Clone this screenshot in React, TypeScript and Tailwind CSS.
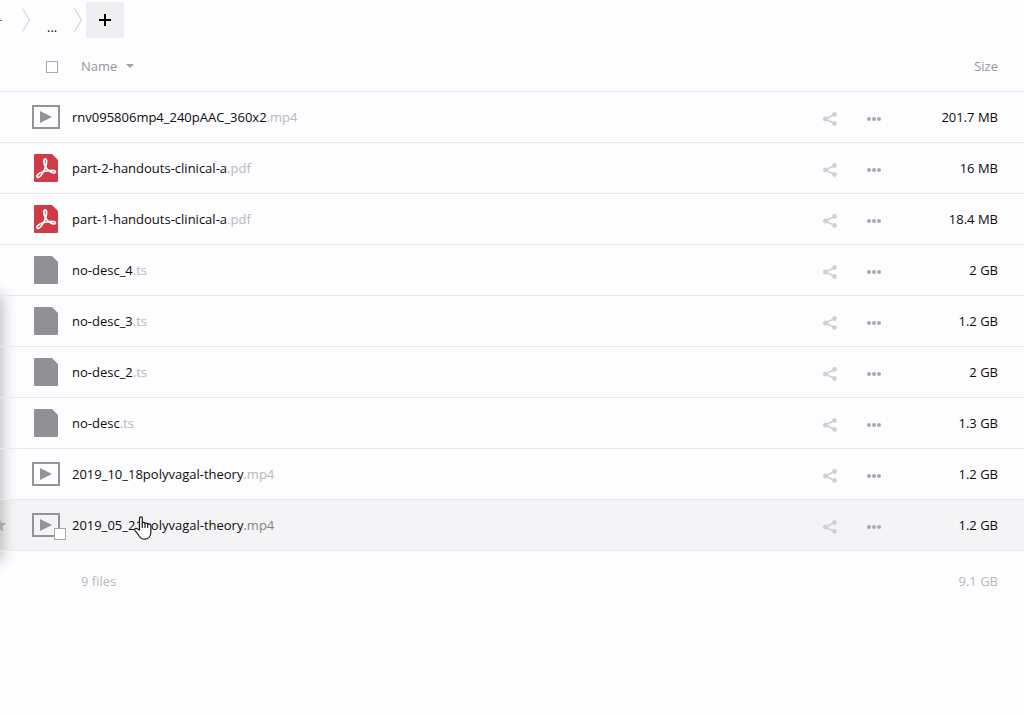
import clsx from 'clsx';

interface FileItem {
    name: string;
    ext: string;
    size: string;
    hovered?: boolean;
}

const files: FileItem[] = [
    { name: 'rnv095806mp4_240pAAC_360x2', ext: 'mp4', size: '201.7 MB' },
    { name: 'part-2-handouts-clinical-a', ext: 'pdf', size: '16 MB' },
    { name: 'part-1-handouts-clinical-a', ext: 'pdf', size: '18.4 MB' },
    { name: 'no-desc_4', ext: 'ts', size: '2 GB' },
    { name: 'no-desc_3', ext: 'ts', size: '1.2 GB' },
    { name: 'no-desc_2', ext: 'ts', size: '2 GB' },
    { name: 'no-desc', ext: 'ts', size: '1.3 GB' },
    { name: '2019_10_18polyvagal-theory', ext: 'mp4', size: '1.2 GB' },
    { name: '2019_05_21polyvagal-theory', ext: 'mp4', size: '1.2 GB', hovered: true },
];

const FileIcon = ({ ext }: { ext: string }) => {
    if (ext === 'mp4') {
        return (
            <svg width="28" height="24" viewBox="0 0 28 24" aria-hidden="true">
                <rect x="1" y="1" width="26" height="22" fill="none" stroke="#959396" strokeWidth="2" />
                <path d="M8 6v12l12-6z" fill="#959396" />
            </svg>
        );
    }
    if (ext === 'pdf') {
        return (
            <svg width="24" height="28" viewBox="0 0 24 28" aria-hidden="true">
                <path d="M1 0h17l6 6v21a1 1 0 0 1-1 1H1a1 1 0 0 1-1-1V1a1 1 0 0 1 1-1z" fill="#cf3c47" />
                <path
                    d="M11 5c1.700-.4 2 2.400 1 6.500-1.200 4.600-4.700 10.400-7.100 11.700-1.500.8-2.800-.8-1.600-2.200 2-2.300 8.200-4.200 13.500-4.500 3.100-.2 4.800.3 4.700 1.400-.1 1.400-2.700 1.200-5-.2-2.900-1.700-5.600-5.100-6.400-8.500-.5-2.200-.2-3.900.9-4.200z"
                    fill="none"
                    stroke="#fff"
                    strokeWidth="1.700"
                    strokeLinejoin="round"
                />
            </svg>
        );
    }
    return (
        <svg width="24" height="28" viewBox="0 0 24 28" aria-hidden="true">
            <path d="M1 0h17l6 6v21a1 1 0 0 1-1 1H1a1 1 0 0 1-1-1V1a1 1 0 0 1 1-1z" fill="#929093" />
        </svg>
    );
};

const ShareIcon = () => (
    <svg width="14" height="14" viewBox="0 0 14 14" fill="#d2d0d3" aria-hidden="true">
        <path d="M11.500 2.500L2.500 7l9 4.500" fill="none" stroke="#d2d0d3" strokeWidth="1.800" />
        <circle cx="2.500" cy="7" r="2.500" />
        <circle cx="11.500" cy="2.500" r="2.400" />
        <circle cx="11.500" cy="11.500" r="2.400" />
    </svg>
);

const MoreIcon = () => (
    <svg width="14" height="14" viewBox="0 0 14 14" fill="#aaa8ab" aria-hidden="true">
        <circle cx="2" cy="7" r="2" />
        <circle cx="7" cy="7" r="2" />
        <circle cx="12" cy="7" r="2" />
    </svg>
);

const Separator = () => (
    <svg width="8" height="24" viewBox="0 0 8 24" fill="none" stroke="#cbc9cc" aria-hidden="true">
        <path d="M.5.5l7 11.500-7 11.500" />
    </svg>
);

const HandCursor = () => (
    <svg
        className="absolute left-[62px] top-4 z-10"
        width="18"
        height="24"
        viewBox="0 0 18 24"
        fill="#fff"
        stroke="#1c1b1f"
        strokeWidth="1.200"
        strokeLinejoin="round"
        strokeLinecap="round"
        aria-hidden="true"
    >
        <path d="M5.500 14V2.200C5.500.3 8.300.3 8.300 2.200V7c.6-.9 2.400-.7 2.700.5.8-.8 2.400-.5 2.700.7 1.300-.7 3.200 0 3.200 1.800v5.500c0 4.500-2.400 7.700-6.400 7.700-3 0-4.300-1.500-5.500-3.500L1 14.500c-.9-1.700.9-2.900 2.300-1.700z" />
        <path d="M8.300 7v4.500M11 7.500v4M13.700 8.200v3.300" fill="none" />
    </svg>
);

const App = () => {
    return (
        <div className="relative min-h-screen overflow-hidden bg-[#fdfcfe] font-['Open_Sans',sans-serif] text-[13px] leading-5 text-[#0d0c0e]">
            {/* edge of the side panel */}
            <div className="absolute -left-10 top-74 h-66 w-10 shadow-[0_0_16px_1px_rgba(0,0,0,0.3)]" />

            <nav className="flex h-10 items-center" aria-label="Breadcrumb">
                <span className="h-px w-[22px]">
                    <span className="block h-px w-0.5 bg-[#6b696c]" />
                </span>
                <Separator />
                <a href="#" className="mx-[17px] pt-3.5 leading-5">...</a>
                <Separator />
                <button className="ml-1 flex h-9 w-[38px] items-center justify-center rounded-xs bg-[#efeef0]" aria-label="New">
                    <svg width="12" height="12" viewBox="0 0 12 12" stroke="#000" strokeWidth="2" aria-hidden="true">
                        <path d="M6 0v12M0 6h12" />
                    </svg>
                </button>
            </nav>

            <table className="w-full table-fixed border-separate border-spacing-0">
                <colgroup>
                    <col className="w-18" />
                    <col />
                    <col className="w-11" />
                    <col className="w-11" />
                    <col className="w-32" />
                </colgroup>
                <thead>
                    <tr className="h-13 text-[#98969a] *:border-b *:border-[#e9e8ea] *:font-normal">
                        <th className="pt-0.5">
                            <input
                                type="checkbox"
                                aria-label="Select all"
                                className="ml-[46px] block size-3 appearance-none border border-[#aba9ac]"
                            />
                        </th>
                        <th className="pl-[9px] text-left">
                            <button className="flex items-center gap-2">
                                Name
                                <svg width="8" height="4" viewBox="0 0 8 4" fill="#a5a3a6" className="ml-px" aria-hidden="true">
                                    <path d="M0 0h8L4 4z" />
                                </svg>
                            </button>
                        </th>
                        <th />
                        <th />
                        <th className="pr-[26px] text-right">Size</th>
                    </tr>
                </thead>
                <tbody>
                    {files.map((file) => (
                        <tr
                            key={file.name}
                            className={clsx('h-[51px] *:border-b *:border-[#e9e8ea]', file.hovered && 'bg-[#f4f3f5]')}
                        >
                            <td className="relative">
                                <div className="flex justify-center pl-5">
                                    <FileIcon ext={file.ext} />
                                </div>
                                {file.hovered && (
                                    <>
                                        <svg className="absolute -left-2 top-[18px]" width="14" height="14" viewBox="0 0 14 14" fill="#a9a7aa" aria-hidden="true">
                                            <path d="M7 0l2.200 4.600 4.800.6-3.500 3.400.9 5L7 11.200l-4.400 2.400.9-5L0 5.200l4.800-.6z" />
                                        </svg>
                                        <input
                                            type="checkbox"
                                            aria-label={`Select ${file.name}`}
                                            className="absolute left-[54px] top-7 size-3 appearance-none border border-[#aba9ac] bg-white"
                                        />
                                    </>
                                )}
                            </td>
                            <td className="relative">
                                <a href="#">
                                    {file.name}
                                    <span className={file.hovered ? 'text-[#858387]' : 'text-[#bab8bb]'}>.{file.ext}</span>
                                </a>
                                {file.hovered && <HandCursor />}
                            </td>
                            <td className="pt-[3px]">
                                <button className="mx-auto block" aria-label="Share">
                                    <ShareIcon />
                                </button>
                            </td>
                            <td className="pt-[3px]">
                                <button className="mx-auto block" aria-label="More">
                                    <MoreIcon />
                                </button>
                            </td>
                            <td className="pr-[26px] text-right">{file.size}</td>
                        </tr>
                    ))}
                </tbody>
                <tfoot>
                    <tr className="h-15 text-[#bab8bb]">
                        <td />
                        <td className="pl-[9px]">9 files</td>
                        <td />
                        <td />
                        <td className="pr-[26px] text-right">9.1 GB</td>
                    </tr>
                </tfoot>
            </table>
        </div>
    );
};

export default App;
